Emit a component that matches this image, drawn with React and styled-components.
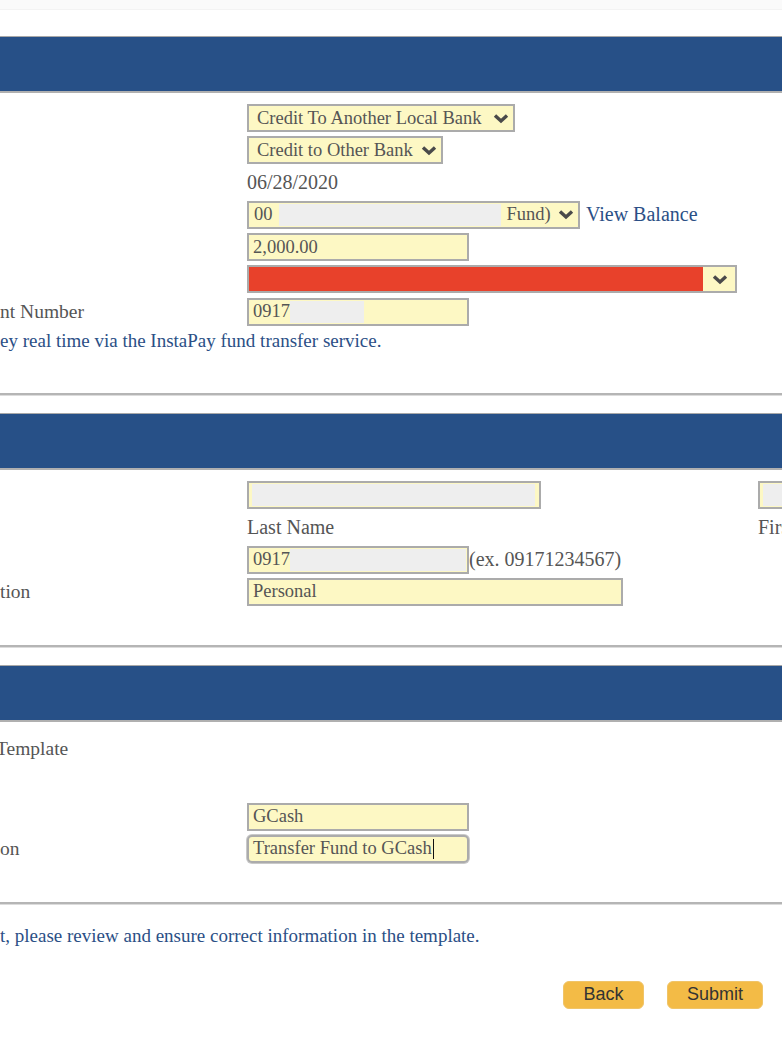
import React from "react";
import styled, { createGlobalStyle } from "styled-components";

const Global = createGlobalStyle`
  html, body { margin: 0; padding: 0; background: #fff; }
  body { overflow: hidden; font-family: "Liberation Serif", "Times New Roman", serif; }
`;

const Page = styled.div`
  width: 782px;
  height: 1042px;
  overflow: hidden;
  background: #fff;
  color: #555;
  font-size: 20px;
`;

const TopStrip = styled.div`
  height: 9px;
  background: #fafafa;
  border-bottom: 1px solid #f3f3f3;
  margin-bottom: 26px;
`;

const HeaderBar = styled.div`
  height: 54px;
  background: #275087;
  border-top: 1px solid #a8a8a8;
  border-bottom: 2px solid #b0b0b0;
`;

const Body = styled.div`
  display: flex;
  flex-direction: column;
  gap: 4.3px;
  padding-top: ${(p) => p.$top || 11}px;
`;

const Row = styled.div`
  display: grid;
  grid-template-columns: 247px 1fr;
  align-items: center;
  height: ${(p) => p.$h || 28}px;
`;

const Label = styled.div`
  white-space: nowrap;
  line-height: 22px;
  font-size: 19.5px;
  margin-left: ${(p) => p.$shift || 0}px;
`;

const Value = styled.div`
  display: flex;
  align-items: center;
  gap: 6px;
  white-space: nowrap;
  min-width: 0;
`;

const Field = styled.div`
  box-sizing: border-box;
  width: ${(p) => p.$w}px;
  height: 28px;
  background: #fdf8c4;
  border: 2px solid #ababab;
  border-radius: ${(p) => (p.$focus ? 5 : 0)}px;
  box-shadow: ${(p) => (p.$focus ? "0 0 0 1px #c9c9c9" : "none")};
  display: flex;
  align-items: center;
  padding: 0 0 0 ${(p) => p.$pad ?? 4}px;
  font-size: 18.5px;
  color: #555;
  overflow: hidden;
  flex-shrink: 0;
`;

const SelectBox = styled(Field)`
  padding-right: 4px;
  gap: 6px;
`;

const Grow = styled.span`
  flex: 1;
`;

const Redacted = styled.span`
  display: block;
  align-self: stretch;
  margin: 1px 0;
  width: ${(p) => (p.$w ? p.$w + "px" : "auto")};
  flex: ${(p) => (p.$w ? "none" : 1)};
  background: #eeeeee;
`;

const RedFill = styled.span`
  flex: 1;
  align-self: stretch;
  background: #e8412b;
  margin-left: -4px;
`;

const ChevronCell = styled.span`
  width: 22px;
  display: flex;
  justify-content: center;
`;

const Caret = styled.span`
  display: inline-block;
  width: 1px;
  height: 20px;
  background: #111;
  margin-left: 1px;
`;

const Link = styled.span`
  color: #2b4f86;
  font-size: 20px;
`;

const Note = styled.div`
  color: #2b4f86;
  font-size: 19px;
  line-height: 22px;
  white-space: nowrap;
  margin-top: ${(p) => p.$top || 0}px;
`;

const Separator = styled.div`
  height: 2px;
  background: #b5b5b5;
  border-bottom: 1px solid #dcdcdc;
  margin-top: ${(p) => p.$top}px;
  margin-bottom: 17px;
`;

const NameGrid = styled.div`
  display: grid;
  grid-template-columns: 511px 200px;
  align-items: center;
  white-space: nowrap;
`;

const Buttons = styled.div`
  display: flex;
  justify-content: flex-end;
  gap: 23px;
  padding-right: 19px;
  margin-top: 34px;
`;

const Button = styled.button`
  height: 28px;
  width: ${(p) => p.$w}px;
  background: #f3bb46;
  border: 1px solid #f0c468;
  border-radius: 6px;
  font-family: "Liberation Sans", Arial, sans-serif;
  font-size: 18px;
  color: #333;
  padding: 0;
  cursor: pointer;
`;

const Chevron = () => (
  <svg width="16" height="11" viewBox="0 0 16 11">
    <polyline points="2,2.5 8,8 14,2.5" fill="none" stroke="#4a4a4a" strokeWidth="3.4" />
  </svg>
);

export default function App() {
  return (
    <Page>
      <Global />
      <TopStrip />

      <HeaderBar />
      <Body>
        <Row>
          <Label />
          <Value>
            <SelectBox $w={268} $pad={8}>
              <Grow>Credit To Another Local Bank</Grow>
              <Chevron />
            </SelectBox>
          </Value>
        </Row>
        <Row>
          <Label />
          <Value>
            <SelectBox $w={196} $pad={8}>
              <Grow>Credit to Other Bank</Grow>
              <Chevron />
            </SelectBox>
          </Value>
        </Row>
        <Row>
          <Label />
          <Value>06/28/2020</Value>
        </Row>
        <Row>
          <Label />
          <Value>
            <SelectBox $w={333} $pad={5}>
              <span>00</span>
              <Redacted $w={222} />
              <Grow>Fund)</Grow>
              <Chevron />
            </SelectBox>
            <Link>View Balance</Link>
          </Value>
        </Row>
        <Row>
          <Label />
          <Value>
            <Field $w={222}>2,000.00</Field>
          </Value>
        </Row>
        <Row>
          <Label />
          <Value>
            <SelectBox $w={490} $pad={4}>
              <RedFill />
              <ChevronCell>
                <Chevron />
              </ChevronCell>
            </SelectBox>
          </Value>
        </Row>
        <Row>
          <Label>nt Number</Label>
          <Value>
            <Field $w={222}>
              <span>0917</span>
              <Redacted $w={74} />
            </Field>
          </Value>
        </Row>
        <Note $top={0}>ey real time via the InstaPay fund transfer service.</Note>
      </Body>
      <Separator $top={41} />

      <HeaderBar />
      <Body>
        <Row>
          <Label />
          <NameGrid>
            <Field $w={294} $pad={3}>
              <Redacted style={{ marginRight: 4 }} />
            </Field>
            <Field $w={200} $pad={3}>
              <Redacted />
            </Field>
          </NameGrid>
        </Row>
        <Row>
          <Label />
          <NameGrid>
            <span>Last Name</span>
            <span>First Name</span>
          </NameGrid>
        </Row>
        <Row>
          <Label />
          <Value>
            <Field $w={222}>
              <span>0917</span>
              <Redacted style={{ marginRight: 1 }} />
            </Field>
            <span style={{ marginLeft: -6 }}>(ex. 09171234567)</span>
          </Value>
        </Row>
        <Row>
          <Label>tion</Label>
          <Value>
            <Field $w={376}>Personal</Field>
          </Value>
        </Row>
      </Body>
      <Separator $top={39} />

      <HeaderBar />
      <Body $top={13}>
        <Row>
          <Label $shift={-4}>Template</Label>
          <Value />
        </Row>
        <Row $h={31} />
        <Row>
          <Label />
          <Value>
            <Field $w={222}>GCash</Field>
          </Value>
        </Row>
        <Row>
          <Label>on</Label>
          <Value>
            <Field $w={222} $focus>
              Transfer Fund to GCash
              <Caret />
            </Field>
          </Value>
        </Row>
      </Body>
      <Separator $top={39} />

      <Note $top={20}>t, please review and ensure correct information in the template.</Note>
      <Buttons>
        <Button $w={81}>Back</Button>
        <Button $w={96}>Submit</Button>
      </Buttons>
    </Page>
  );
}
